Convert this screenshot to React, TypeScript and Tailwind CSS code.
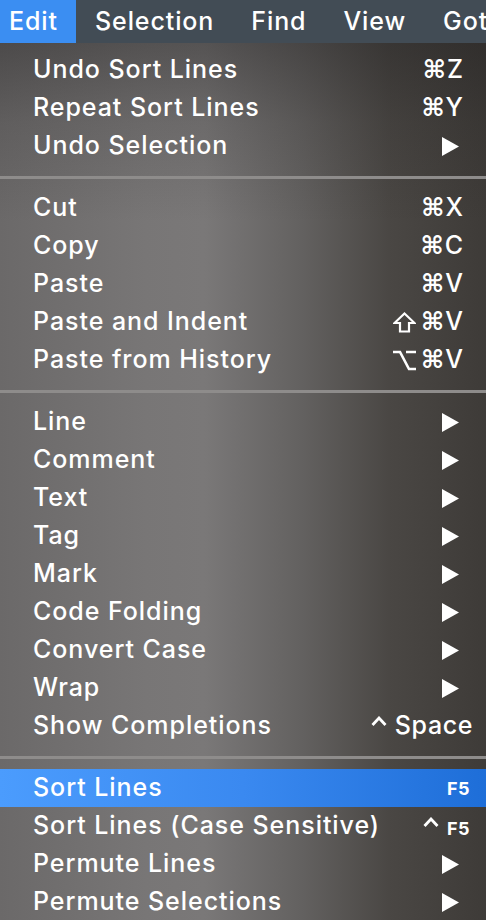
import React from "react";

type Item =
  | { type: "sep" }
  | { type: "item"; label: string; shortcut?: string; sub?: boolean; active?: boolean };

const Tri = () => (
  <svg width="17" height="19" viewBox="0 0 17 19" className="block">
    <path d="M0 0 L17 9.5 L0 19 Z" fill="#ffffff" />
  </svg>
);

const Cmd = () => (
  <span className="font-bold" style={{ fontFamily: '"DejaVu Sans", sans-serif' }}>
    ⌘
  </span>
);

const Shift = () => (
  <svg width="23" height="21" viewBox="0 0 23 21" className="block">
    <path
      d="M11.5 1.5 L21.5 11 L16 11 L16 19.5 L7 19.5 L7 11 L1.5 11 Z"
      fill="none"
      stroke="#ffffff"
      strokeWidth="2.2"
      strokeLinejoin="miter"
    />
  </svg>
);

const Opt = () => (
  <svg width="23" height="21" viewBox="0 0 23 21" className="block">
    <path d="M0 2 L7 2 L16 19 L23 19 M13 2 L23 2" fill="none" stroke="#ffffff" strokeWidth="2.6" />
  </svg>
);

const Ctrl = () => (
  <svg width="16" height="10" viewBox="0 0 16 10" className="block">
    <path d="M1.5 9 L8 2 L14.5 9" fill="none" stroke="#ffffff" strokeWidth="2.8" />
  </svg>
);

const items: Item[] = [
  { type: "item", label: "Undo Sort Lines", shortcut: "Z" },
  { type: "item", label: "Repeat Sort Lines", shortcut: "Y" },
  { type: "item", label: "Undo Selection", sub: true },
  { type: "sep" },
  { type: "item", label: "Cut", shortcut: "X" },
  { type: "item", label: "Copy", shortcut: "C" },
  { type: "item", label: "Paste", shortcut: "V" },
  { type: "item", label: "Paste and Indent", shortcut: "shiftV" },
  { type: "item", label: "Paste from History", shortcut: "optV" },
  { type: "sep" },
  { type: "item", label: "Line", sub: true },
  { type: "item", label: "Comment", sub: true },
  { type: "item", label: "Text", sub: true },
  { type: "item", label: "Tag", sub: true },
  { type: "item", label: "Mark", sub: true },
  { type: "item", label: "Code Folding", sub: true },
  { type: "item", label: "Convert Case", sub: true },
  { type: "item", label: "Wrap", sub: true },
  { type: "item", label: "Show Completions", shortcut: "space" },
  { type: "sep" },
  { type: "item", label: "Sort Lines", shortcut: "f5", active: true },
  { type: "item", label: "Sort Lines (Case Sensitive)", shortcut: "cf5" },
  { type: "item", label: "Permute Lines", sub: true },
  { type: "item", label: "Permute Selections", sub: true },
];

function Right({ it }: { it: Extract<Item, { type: "item" }> }) {
  if (it.sub) {
    return (
      <div className="pr-[27px]">
        <Tri />
      </div>
    );
  }
  if (it.shortcut === "space") {
    return (
      <div className="pr-[13px] flex items-center gap-[8px]">
        <div className="-mt-[10px]">
          <Ctrl />
        </div>
        <span className="tracking-[0.6px]">Space</span>
      </div>
    );
  }
  if (it.shortcut === "f5") {
    return <div className="pr-[16px] text-[18px] font-bold tracking-[0.5px]">F5</div>;
  }
  if (it.shortcut === "cf5") {
    return (
      <div className="pr-[16px] flex items-center gap-[8px]">
        <div className="-mt-[8px]">
          <Ctrl />
        </div>
        <span className="text-[18px] font-bold tracking-[0.5px] mt-[4px]">F5</span>
      </div>
    );
  }
  if (it.shortcut === "shiftV" || it.shortcut === "optV") {
    return (
      <div className="pr-[22px] flex items-center gap-[5px]">
        {it.shortcut === "shiftV" ? <Shift /> : <Opt />}
        <span className="tracking-[1px]">
          <Cmd />V
        </span>
      </div>
    );
  }
  return (
    <div className="pr-[22px] tracking-[1px]">
      <Cmd />
      {it.shortcut}
    </div>
  );
}

export default function App() {
  return (
    <div
      className="w-[486px] h-[920px] overflow-hidden text-white font-medium"
      style={{ fontFamily: 'Inter, "Noto Sans", sans-serif' }}
    >
      <div className="h-[43px] bg-[#424c55] flex items-center text-[25px] tracking-[0.9px] whitespace-nowrap overflow-hidden">
        <div className="shrink-0 h-full w-[76px] bg-[#3b8ef2] flex items-center pl-[9px]">Edit</div>
        <div className="shrink-0 pl-[19px]">Selection</div>
        <div className="shrink-0 pl-[37px]">Find</div>
        <div className="shrink-0 pl-[37px]">View</div>
        <div className="shrink-0 pl-[37px]">Goto</div>
      </div>
      <div className="h-[877px] pt-[8px] bg-[linear-gradient(to_bottom,rgba(30,28,28,0.4)_0px,rgba(30,28,28,0.15)_80px,rgba(30,28,28,0)_180px),linear-gradient(to_right,#6b6969_0%,#787676_30%,#7a7878_42%,#636160_62%,#4a4744_80%,#3e3b38_100%)] text-[25px]">
        {items.map((it, i) =>
          it.type === "sep" ? (
            <div key={i} className="h-[24px] flex items-center">
              <div className="h-[3px] w-full bg-[#8e8c8b]" />
            </div>
          ) : (
            <div
              key={i}
              className={`h-[38px] flex items-center justify-between pl-[33px] ${
                it.active ? "bg-[linear-gradient(to_right,#4b9cfd,#3a89f0_50%,#1e6ed8)]" : ""
              }`}
            >
              <span className="whitespace-nowrap tracking-[0.95px]">{it.label}</span>
              <Right it={it} />
            </div>
          )
        )}
      </div>
    </div>
  );
}
